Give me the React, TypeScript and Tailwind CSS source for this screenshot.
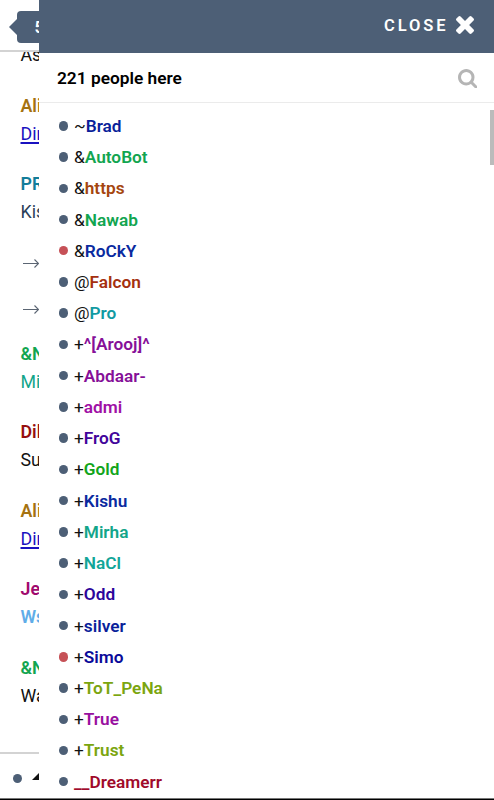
type Line = { text: string; style: string };

const slate = 'bg-[#4d5f76]';

const people = [
  { mode: '~', nick: 'Brad', color: 'text-[#0a1f9a]' },
  { mode: '&', nick: 'AutoBot', color: 'text-[#12a550]' },
  { mode: '&', nick: 'https', color: 'text-[#a5460f]' },
  { mode: '&', nick: 'Nawab', color: 'text-[#12a550]' },
  { mode: '&', nick: 'RoCkY', color: 'text-[#0a2a9f]', away: true },
  { mode: '@', nick: 'Falcon', color: 'text-[#a5300f]' },
  { mode: '@', nick: 'Pro', color: 'text-[#129aa2]' },
  { mode: '+', nick: '^[Arooj]^', color: 'text-[#860f98]' },
  { mode: '+', nick: 'Abdaar-', color: 'text-[#860f98]' },
  { mode: '+', nick: 'admi', color: 'text-[#a010a5]' },
  { mode: '+', nick: 'FroG', color: 'text-[#42059b]' },
  { mode: '+', nick: 'Gold', color: 'text-[#12a51c]' },
  { mode: '+', nick: 'Kishu', color: 'text-[#0a2a9f]' },
  { mode: '+', nick: 'Mirha', color: 'text-[#12a58a]' },
  { mode: '+', nick: 'NaCl', color: 'text-[#12a598]' },
  { mode: '+', nick: 'Odd', color: 'text-[#2c059b]' },
  { mode: '+', nick: 'silver', color: 'text-[#0a1f9a]' },
  { mode: '+', nick: 'Simo', color: 'text-[#0a0a9a]', away: true },
  { mode: '+', nick: 'ToT_PeNa', color: 'text-[#7ba50f]' },
  { mode: '+', nick: 'True', color: 'text-[#98109f]' },
  { mode: '+', nick: 'Trust', color: 'text-[#7ba50f]' },
  { mode: '', nick: '__Dreamerr', color: 'text-[#a00a2a]' },
];

const early: Line[][] = [
  [
    { text: 'Ali', style: 'font-semibold text-[#a5720f]' },
    { text: 'Dir', style: 'text-[#1a12c0] underline decoration-[1.5px] underline-offset-[2px]' },
  ],
  [
    { text: 'PRO', style: 'font-semibold text-[#127d9a]' },
    { text: 'Kishu', style: 'text-[#2c3f58]' },
  ],
];

const late: Line[][] = [
  [
    { text: '&Nawab', style: 'font-semibold text-[#12a550]' },
    { text: 'Mirha', style: 'text-[#12a58a]' },
  ],
  [
    { text: 'Dill', style: 'font-semibold text-[#960f0f]' },
    { text: 'Sure', style: 'text-[#111]' },
  ],
  [
    { text: 'Ali', style: 'font-semibold text-[#a5720f]' },
    { text: 'Dir', style: 'text-[#1a12c0] underline decoration-[1.5px] underline-offset-[2px]' },
  ],
  [
    { text: 'Jess', style: 'font-semibold text-[#a00a6e]' },
    { text: 'Ws', style: 'font-semibold text-[#5fade8]' },
  ],
  [
    { text: '&Nawab', style: 'font-semibold text-[#12a550]' },
    { text: 'Wait', style: 'text-[#111]' },
  ],
];

function Message({ lines }: { lines: Line[] }) {
  return (
    <div className="mb-[22.4px]">
      {lines.map((l) => (
        <div key={l.text} className={`h-7 whitespace-nowrap leading-7 ${l.style}`}>
          {l.text}
        </div>
      ))}
    </div>
  );
}

function Joined() {
  return (
    <div className="flex h-[45.5px] items-center pl-[2px]">
      <svg className="h-3 w-4 shrink-0" viewBox="0 0 16 12" fill="none" stroke="#5b6573" strokeWidth="1.1">
        <path d="M0 5.5H15.5M11.5 1.5L15.5 5.5L11.5 9.5" />
      </svg>
    </div>
  );
}

function Chat() {
  return (
    <section className="flex w-[39px] shrink-0 flex-col overflow-hidden">
      <div className="flex h-[52px] shrink-0 items-center border-b-2 border-[#d3d3d3] pl-[9px]">
        <svg className="mt-[3px] h-4 w-2 shrink-0" viewBox="0 0 8 16">
          <path d="M0 8L8 0V16Z" fill="#4d5f76" />
        </svg>
        <div className={`mt-[3px] h-8 w-12 shrink-0 rounded pl-[17.5px] text-[17px] font-semibold leading-8 text-white ${slate}`}>
          53
        </div>
      </div>
      <div className="h-[700px] shrink-0 overflow-hidden pl-[20.5px] text-[17.8px]">
        <div className="-mt-[10.6px] mb-[22.2px] h-7 leading-7 text-[#111]">As</div>
        {early.map((m, i) => (
          <Message key={i} lines={m} />
        ))}
        <div className="-mt-[7px] mb-[7.6px]">
          <Joined />
          <Joined />
        </div>
        {late.map((m, i) => (
          <Message key={i} lines={m} />
        ))}
      </div>
      <div className="flex grow items-center border-t-2 border-[#d3d3d3] pl-[13px] pt-[4px]">
        <span className={`size-[9px] shrink-0 rounded-full ${slate}`} />
        <svg className="mb-[3px] ml-[10px] h-[7px] w-[7px] shrink-0" viewBox="0 0 7 7">
          <path d="M0 7L7 0V7Z" fill="#111" />
        </svg>
      </div>
    </section>
  );
}

function People() {
  return (
    <section className="flex min-w-0 grow flex-col bg-white">
      <div className={`flex h-[53px] shrink-0 items-center justify-end pr-[20.5px] pb-[3px] text-white ${slate}`}>
        <span className="pt-[2px] text-[16.5px] font-semibold tracking-[2.9px]">CLOSE</span>
        <svg className="ml-[7px] size-[18px]" viewBox="302 366 1188 1188" fill="currentColor">
          <path d="M1490 1322q0 40-28 68l-136 136q-28 28-68 28t-68-28l-294-294-294 294q-28 28-68 28t-68-28l-136-136q-28-28-28-68t28-68l294-294-294-294q-28-28-28-68t28-68l136-136q28-28 68-28t68 28l294 294 294-294q28-28 68-28t68 28l136 136q28 28 28 68t-28 68l-294 294 294 294q28 28 28 68z" />
        </svg>
      </div>
      <div className="flex h-[50px] shrink-0 items-center justify-between border-b border-[#ebebeb] pl-[18px] pr-[17px]">
        <h1 className="text-[17.3px] font-semibold leading-6">221 people here</h1>
        <svg className="mt-[2px] size-[19.5px]" viewBox="64 128 1664 1664" fill="#b5b5b5">
          <path d="M1216 832q0-185-131.5-316.5t-316.5-131.5-316.5 131.5-131.5 316.5 131.5 316.5 316.5 131.5 316.5-131.5 131.5-316.5zm512 832q0 52-38 90t-90 38q-54 0-90-38l-343-342q-179 124-399 124-143 0-273.5-55.5t-225-150-150-225-55.5-273.5 55.5-273.5 150-225 225-150 273.5-55.5 273.5 55.5 225 150 150 225 55.5 273.5q0 220-124 399l343 343q37 37 37 90z" />
        </svg>
      </div>
      <div className="flex min-h-0 grow justify-between">
        <ul className="pl-[19.5px] pt-[7.2px]">
          {people.map((p) => (
            <li key={p.nick} className="flex h-[31.24px] items-center whitespace-nowrap text-[17.25px] leading-6">
              <span className={`mr-[6px] size-[9.5px] shrink-0 rounded-full ${p.away ? 'bg-[#c65157]' : slate}`} />
              <span className="text-[#111]">{p.mode}</span>
              <span className={`font-semibold ${p.color}`}>{p.nick}</span>
            </li>
          ))}
        </ul>
        <div className="mt-[7px] h-[55px] w-1 bg-[#bbb]" />
      </div>
    </section>
  );
}

export default function App() {
  return (
    <main className="flex h-[800px] w-[494px] flex-col overflow-hidden bg-white font-['Roboto',sans-serif] text-black">
      <div className="flex min-h-0 grow">
        <Chat />
        <People />
      </div>
      <div className="h-[2px] shrink-0 border-t border-[#777] bg-black" />
    </main>
  );
}
